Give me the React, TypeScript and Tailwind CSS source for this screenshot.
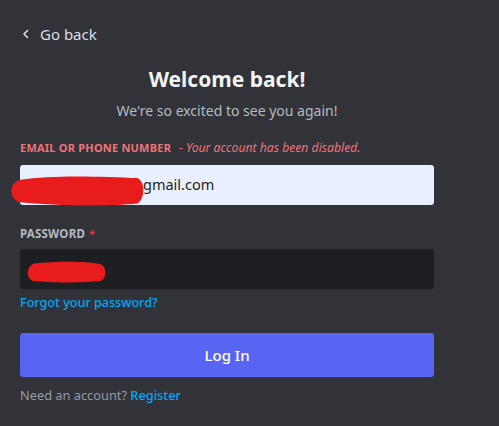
import React from "react";

function ChevronLeft() {
  return (
    <svg width="12" height="12" viewBox="0 0 12 12" fill="none" className="shrink-0">
      <path d="M7.5 2.5 L4 6 L7.5 9.5" stroke="#dbdee1" strokeWidth="1.6" strokeLinecap="round" strokeLinejoin="round" />
    </svg>
  );
}

// Hand-drawn marker strokes hiding personal details
function Scribble({ className, d }: { className: string; d: string }) {
  return (
    <svg className={className} viewBox="0 0 100 40" preserveAspectRatio="none">
      <path d={d} fill="#e81c1c" />
    </svg>
  );
}

export default function App() {
  return (
    <div
      className="w-[499px] h-[426px] bg-[#313338] overflow-hidden"
      style={{ fontFamily: '"Noto Sans", "Open Sans", sans-serif' }}
    >
      <div className="w-[414px] ml-5 pt-[23px]">
        <button className="flex items-center gap-[8px] h-[22px] text-[15px] text-[#dbdee1]">
          <ChevronLeft />
          <span>Go back</span>
        </button>

        <h1 className="mt-[21px] text-center text-[21px] leading-[26px] font-bold text-[#f2f3f5]">
          Welcome back!
        </h1>
        <p className="mt-[9px] text-center text-[14px] leading-[20px] text-[#b5bac1]">
          We're so excited to see you again!
        </p>

        <div className="mt-[19px] flex items-baseline text-[11px] leading-[16px]">
          <span className="font-bold tracking-[0.02em] text-[#f0727a]">EMAIL OR PHONE NUMBER</span>
          <span className="italic text-[#f0727a] ml-[8px] text-[12.2px]">- Your account has been disabled.</span>
        </div>

        <div className="relative mt-[9px] h-[40px] rounded-[3px] bg-[#e8f0fe] flex items-center">
          <span className="pl-[123px] text-[14.5px] text-[#1e1f22]">gmail.com</span>
          <Scribble
            className="absolute left-[-10px] top-[8px] w-[134px] h-[34px]"
            d="M8 8 C30 2 70 4 95 6 C101 10 101 30 95 36 C70 40 30 38 6 34 C-1 28 -1 12 8 8 Z"
          />
        </div>

        <div className="mt-[21px] flex items-baseline text-[11.5px] leading-[16px]">
          <span className="font-bold tracking-[0.02em] text-[#b5bac1]">PASSWORD</span>
          <span className="ml-[4px] text-[#f23f42]">*</span>
        </div>

        <div className="relative mt-[7px] h-[40px] rounded-[3px] bg-[#1e1f22]">
          <Scribble
            className="absolute left-[6px] top-[11px] w-[80px] h-[23px]"
            d="M10 6 C40 2 80 2 94 8 C101 14 101 30 94 36 C70 40 30 40 8 36 C0 30 0 12 10 6 Z"
          />
        </div>

        <div className="mt-[5px] text-[12.6px] leading-[18px] font-medium text-[#00a8fc]">Forgot your password?</div>

        <button className="mt-[21px] w-full h-[44px] rounded-[3px] bg-[#5865f2] text-white text-[15px] font-medium">
          Log In
        </button>

        <div className="mt-[9px] text-[12.8px] leading-[18px] text-[#949ba4]">
          Need an account? <span className="text-[#00a8fc] font-medium">Register</span>
        </div>
      </div>
    </div>
  );
}
